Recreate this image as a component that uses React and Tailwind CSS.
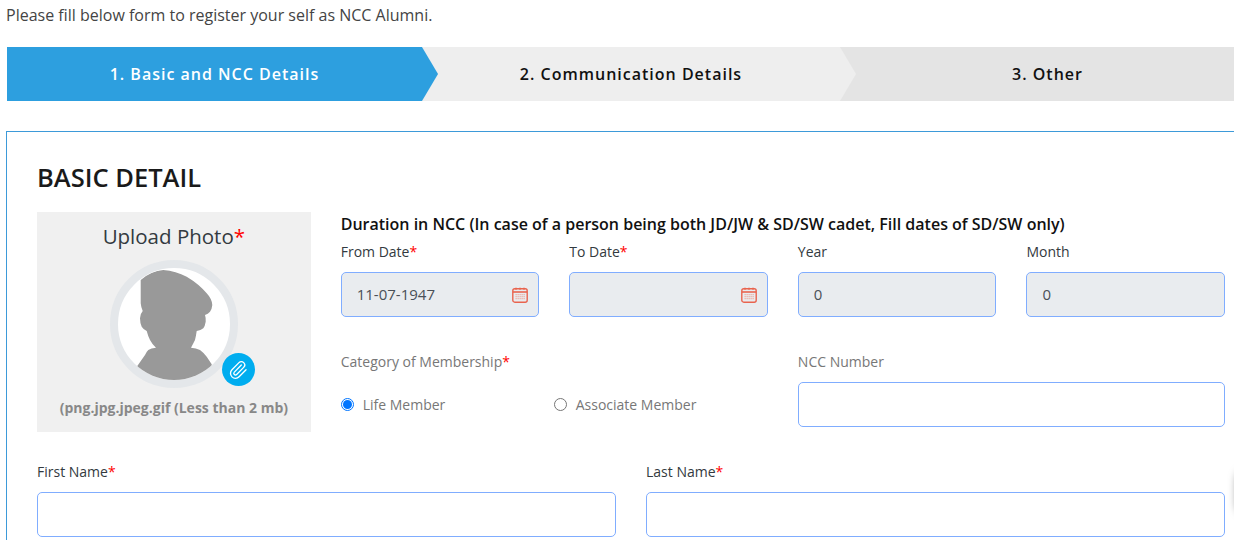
import React from "react";
import { Paperclip } from "lucide-react";

function Req() {
  return <span className="text-[#ff0000]">*</span>;
}

function Calendar() {
  const dots = [];
  for (let r = 0; r < 3; r++) for (let c = 0; c < 5; c++) dots.push(<rect key={r + "-" + c} x={3.6 + c * 2} y={7.2 + r * 2} width="1" height="1" fill="#ef8a78" />);
  return (
    <svg width="16" height="16" viewBox="0 0 16 16" fill="none">
      <rect x="0.8" y="1.8" width="14.4" height="13.4" rx="2" stroke="#e9644f" strokeWidth="1.4" />
      <path d="M1 5h14" stroke="#e9644f" strokeWidth="1.6" />
      <path d="M4 .6v2.4M8 .6v2.4M12 .6v2.4" stroke="#e9644f" strokeWidth="1" />
      {dots}
    </svg>
  );
}

function Field({ label, req, value, icon, disabled, grey, className = "" }) {
  return (
    <div className={"flex flex-col " + className}>
      <label className={"text-[14px] leading-[21px] mb-[10px] " + (grey ? "text-[#777777]" : "text-[#333a40]")}>
        {label}
        {req && <Req />}
      </label>
      <div className={"h-[45px] rounded-[5px] border border-[#80adff] flex items-center justify-between pl-[15px] pr-[10px] text-[15px] text-[#495057] " + (disabled ? "bg-[#e9ecef]" : "bg-white")}>
        <span>{value}</span>
        {icon && <Calendar />}
      </div>
    </div>
  );
}

function Avatar() {
  return (
    <div className="relative w-[128px] h-[128px] mt-[10px]">
      <div className="w-full h-full rounded-full border-[8px] border-[#e4e7ea] bg-white overflow-hidden">
        <svg width="112" height="112" viewBox="0 0 112 112">
          <path
            fill="#999999"
            d="M22.7 12 Q33 3 45.3 2 Q58 3 68.7 8.7 Q81 16 88.7 25.3 Q94 31 94.3 37 Q94 41 92 43.7 Q90 46 87 47 Q88 50 87.7 53.7 Q87 58 85.3 60.3 Q82 63 78.7 63 Q78 68 77 72 Q75 76 73 79.7 Q78 80 82 82 Q86 85 88.7 88.7 L93.7 96.3 L94 112 L18 112 L19.3 98 L27 87 Q29 83 30.3 82 Q33 80 38 79.7 Q34 76 32 72 Q30 68 28.7 63 Q25 61 23.7 58.7 Q22 55 22 50.3 Q22 46 24.7 43 Q23 39 22.7 35.3 Z"
          />
        </svg>
      </div>
      <div className="absolute left-[112px] top-[93px] w-[33px] h-[33px] rounded-full bg-[#00adef] flex items-center justify-center">
        <Paperclip size={20} color="#ffffff" strokeWidth={1.6} />
      </div>
    </div>
  );
}

function Radio({ checked, label, className = "" }) {
  return (
    <div className={"flex items-center text-[14px] text-[#777777] " + className}>
      <span className={"w-[13px] h-[13px] rounded-full border flex items-center justify-center mr-[9px] bg-white " + (checked ? "border-[#0075ff]" : "border-[#767676]")}>
        {checked && <span className="w-[9px] h-[9px] rounded-full bg-[#0075ff]" />}
      </span>
      <span>{label}</span>
    </div>
  );
}

export default function App() {
  return (
    <div
      className="relative w-[1234px] h-[540px] overflow-hidden bg-white pl-[6px] text-[#212529]"
      style={{ fontFamily: '"Open Sans", sans-serif' }}
    >
      <div className="w-[1249px]">
        <p className="text-[16px] leading-[30px] text-[#444444]">Please fill below form to register your self as NCC Alumni.</p>

        <div className="flex h-[54px] mt-[17px] ml-px text-[16px] font-semibold tracking-[1px]">
          <div className="relative z-20 w-[415px] bg-[#2d9fdf] text-white flex items-center justify-center">
            1. Basic and NCC Details
            <span className="absolute left-full top-0 w-[16px] h-full bg-[#2d9fdf] [clip-path:polygon(0_0,100%_50%,0_100%)]" />
          </div>
          <div className="relative z-10 w-[418px] bg-[#eeeeee] text-[#111111] flex items-center justify-center">
            2. Communication Details
            <span className="absolute left-full top-0 w-[16px] h-full bg-[#eeeeee] [clip-path:polygon(0_0,100%_50%,0_100%)]" />
          </div>
          <div className="w-[415px] bg-[#e4e4e4] text-[#111111] flex items-center justify-center">3. Other</div>
        </div>

        <div className="mt-[30px] border border-[#3d9ad9] pl-[30px] pr-[29px] pt-[27px] pb-[20px]">
          <h2 className="text-[25.5px] leading-[36px] font-semibold text-[#1a1a1a] mb-[17px]">BASIC DETAIL</h2>

          <div className="flex gap-[30px]">
            <div className="w-[273.7px] h-[220px] shrink-0 bg-[#f0f0f0] flex flex-col items-center pt-[11px]">
              <div className="text-[20.5px] leading-[27px] text-[#333a40]">
                Upload Photo
                <Req />
              </div>
              <Avatar />
              <div className="mt-[10px] text-[14px] leading-[20px] font-bold text-[#888888]">(png.jpg.jpeg.gif (Less than 2 mb)</div>
            </div>

            <div className="flex-1 min-w-0">
              <div className="text-[16px] leading-[24px] font-semibold text-[#111111]">
                Duration in NCC (In case of a person being both JD/JW &amp; SD/SW cadet, Fill dates of SD/SW only)
              </div>
              <div className="flex gap-[30px] mt-[5px]">
                <Field className="flex-1" label="From Date" req value="11-07-1947" icon disabled />
                <Field className="flex-1" label="To Date" req value="" icon disabled />
                <Field className="flex-1" label="Year" value="0" disabled />
                <Field className="flex-1" label="Month" value="0" disabled />
              </div>
              <div className="flex gap-[30px] mt-[34px]">
                <div className="flex-1 min-w-0">
                  <div className="text-[14px] leading-[21px] text-[#777777]">
                    Category of Membership
                    <Req />
                  </div>
                  <div className="flex mt-[22px]">
                    <Radio checked label="Life Member" className="w-[213px]" />
                    <Radio label="Associate Member" />
                  </div>
                </div>
                <Field className="flex-1" label="NCC Number" grey />
              </div>
            </div>
          </div>

          <div className="flex gap-[30px] mt-[29px]">
            <Field className="flex-1" label="First Name" req />
            <Field className="flex-1" label="Last Name" req />
          </div>
        </div>
      </div>

      <div className="absolute left-[1237px] top-[470px] w-[20px] h-[44px] rounded-full bg-white shadow-[0_0_8px_rgba(0,0,0,0.5)]" />
    </div>
  );
}
